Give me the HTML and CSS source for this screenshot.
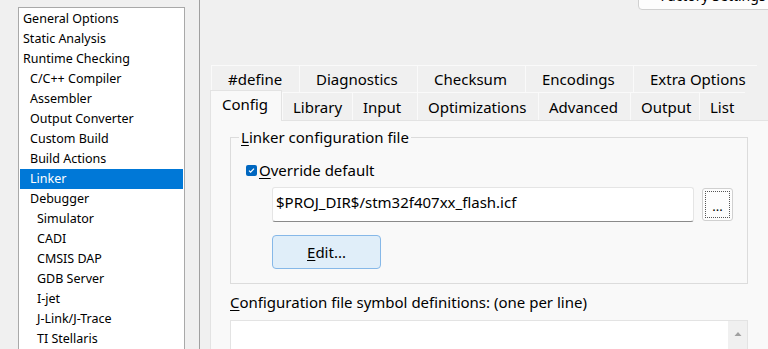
FILE: index.html
```html
<!DOCTYPE html>
<html lang="en">
<head>
  <meta charset="UTF-8">
  <title>Options for node - Linker</title>
  <link rel="stylesheet" href="styles.css">
</head>
<body>
  <div class="window">
    <!-- category tree -->
    <aside class="sidebar">
      <ul class="tree">
        <li class="lvl0">General Options</li>
        <li class="lvl0">Static Analysis</li>
        <li class="lvl0">Runtime Checking</li>
        <li class="lvl1">C/C++ Compiler</li>
        <li class="lvl1">Assembler</li>
        <li class="lvl1">Output Converter</li>
        <li class="lvl1">Custom Build</li>
        <li class="lvl1">Build Actions</li>
        <li class="lvl1 selected">Linker</li>
        <li class="lvl1">Debugger</li>
        <li class="lvl2">Simulator</li>
        <li class="lvl2">CADI</li>
        <li class="lvl2">CMSIS DAP</li>
        <li class="lvl2">GDB Server</li>
        <li class="lvl2">I-jet</li>
        <li class="lvl2">J-Link/J-Trace</li>
        <li class="lvl2">TI Stellaris</li>
      </ul>
    </aside>

    <main class="main">
      <div class="topbar">
        <button class="btn factory">Factory Settings</button>
      </div>

      <!-- two rows of tabs -->
      <div class="tabs">
        <div class="tab-row back">
          <div class="tab">#define</div>
          <div class="tab">Diagnostics</div>
          <div class="tab">Checksum</div>
          <div class="tab">Encodings</div>
          <div class="tab">Extra Options</div>
        </div>
        <div class="tab-row front">
          <div class="tab active">Config</div>
          <div class="tab">Library</div>
          <div class="tab">Input</div>
          <div class="tab">Optimizations</div>
          <div class="tab">Advanced</div>
          <div class="tab">Output</div>
          <div class="tab">List</div>
        </div>
      </div>

      <section class="panel">
        <fieldset class="group">
          <legend><u>L</u>inker configuration file</legend>
          <div class="group-body">
            <label class="check">
              <span class="box">
                <svg width="11" height="11" viewBox="0 0 11 11"><path d="M3 5.6 L4.6 7.2 L8 3.6" fill="none" stroke="#fff" stroke-width="1.2"/></svg>
              </span>
              <span><u>O</u>verride default</span>
            </label>
            <div class="file-row">
              <div class="input">$PROJ_DIR$/stm32f407xx_flash.icf</div>
              <button class="btn browse"><span class="focus">...</span></button>
            </div>
            <button class="btn edit"><u>E</u>dit...</button>
          </div>
        </fieldset>

        <div class="field-label"><u>C</u>onfiguration file symbol definitions: (one per line)</div>
        <div class="textarea">
          <div class="scrollbar">
            <svg width="8" height="6" viewBox="0 0 8 6"><path d="M0.5 5 L4 1 L7.5 5 Z" fill="#a0a0a0"/></svg>
          </div>
        </div>
      </section>
    </main>
  </div>
</body>
</html>
```

FILE: styles.css
```css
:root {
  --bg: #f0f0f0;
  --panel: #f9f9f9;
  --line: #dcdcdc;
  --select: #0078d7;
}
body {
  margin: 0;
  background: var(--bg);
  font-family: "Noto Sans", "Open Sans", sans-serif;
  font-size: 15px;
  color: #000;
  height: 349px;
  overflow: hidden;
}
u {
  text-underline-offset: 2px;
}
.window {
  display: flex;
  height: 349px;
}

/* tree */
.sidebar {
  flex: none;
  width: 200px;
  box-sizing: border-box;
  border-right: 1px solid #a0a0a0;
  padding: 7px 0 0 18px;
}
.tree {
  list-style: none;
  margin: 0;
  padding: 1px;
  width: 167px;
  height: 400px;
  box-sizing: border-box;
  background: #fff;
  border: 1px solid #a9a9a9;
  font-size: 12.5px;
}
.tree li {
  height: 20px;
  line-height: 20px;
  white-space: nowrap;
}
.tree .lvl0 { padding-left: 3px; }
.tree .lvl1 { padding-left: 10px; }
.tree .lvl2 { padding-left: 17px; }
.tree .selected {
  background: var(--select);
  color: #fff;
}

/* right side */
.main {
  flex: 1;
  min-width: 0;
  padding-left: 10px;
}
.btn {
  font: inherit;
  color: #000;
  background: #fdfdfd;
  border: 1px solid #d0d0d0;
  border-radius: 4px;
  padding: 0;
}
.topbar {
  display: flex;
  justify-content: flex-end;
  margin: -20px -20px 0 0;
  height: 30px;
}
.factory {
  width: 150px;
  height: 30px;
  font-size: 14px;
}

.tabs {
  margin-top: 55px;
}
.tab-row {
  display: flex;
  align-items: flex-end;
}
.tab {
  box-sizing: border-box;
  display: flex;
  align-items: center;
  white-space: nowrap;
  background: var(--bg);
  border-top: 1px solid #fafafa;
  border-left: 1px solid #fafafa;
}
.back {
  height: 27px;
  padding-left: 1px;
}
.back .tab {
  height: 27px;
  padding-left: 16px;
}
.back .tab:nth-child(1) { width: 88px; }
.back .tab:nth-child(2) { width: 118px; }
.back .tab:nth-child(3) { width: 108px; }
.back .tab:nth-child(4) { width: 108px; }
.back .tab:nth-child(5) { width: 124px; }

.front {
  height: 28px;
}
.front .tab {
  height: 28px;
  padding-left: 10px;
}
.front .tab:nth-child(1) { width: 72px; }
.front .tab:nth-child(2) { width: 70px; }
.front .tab:nth-child(3) { width: 65px; }
.front .tab:nth-child(4) { width: 121px; }
.front .tab:nth-child(5) { width: 92px; }
.front .tab:nth-child(6) { width: 69px; }
.front .tab:nth-child(7) { width: 46px; }
.front .tab.active {
  position: relative;
  z-index: 1;
  height: 31px;
  margin-bottom: -1px;
  padding: 0 0 4px 11px;
  background: var(--panel);
  border: 1px solid #e3e3e3;
  border-bottom: none;
}

.panel {
  background: var(--panel);
  border: 1px solid #e3e3e3;
  margin-right: -30px;
  padding: 6px 49px 0 19px;
  height: 300px;
}
.group {
  margin: 0;
  padding: 0;
  min-width: 0;
  border: 1px solid var(--line);
}
.group legend {
  margin-left: 8px;
  padding: 0 2px;
  line-height: 20px;
}
.group-body {
  padding: 13px 14px 14px 15px;
}
.check {
  display: flex;
  align-items: center;
  height: 20px;
  gap: 2px;
}
.box {
  width: 11px;
  height: 11px;
  border-radius: 2px;
  background: #0067c0;
  display: flex;
}
.file-row {
  display: flex;
  align-items: flex-start;
  gap: 8px;
  margin: 7px 0 0 26px;
}
.input {
  width: 425px;
  height: 35px;
  box-sizing: border-box;
  background: #fff;
  border: 1px solid #e5e5e5;
  border-bottom-color: #8a8a8a;
  border-radius: 3px;
  padding: 4px 0 0 3px;
  line-height: 20px;
}
.browse {
  width: 31px;
  height: 33px;
  margin-top: 1px;
  padding: 2px;
  border-radius: 3px;
}
.browse .focus {
  display: flex;
  align-items: flex-end;
  justify-content: center;
  height: 100%;
  box-sizing: border-box;
  border: 1px dotted #555;
  font-size: 13px;
  line-height: 18px;
  padding-bottom: 2px;
}
.edit {
  display: block;
  width: 109px;
  height: 34px;
  margin: 13px 0 0 26px;
  background: #e0eef9;
  border-color: #86b8e8;
}

.field-label {
  margin-top: 8px;
  line-height: 20px;
}
.textarea {
  margin-top: 8px;
  height: 60px;
  background: #fff;
  border: 1px solid #e3e3e3;
  display: flex;
  justify-content: flex-end;
}
.scrollbar {
  width: 19px;
  background: #f0f0f0;
  display: flex;
  justify-content: center;
  padding-top: 10px;
  box-sizing: border-box;
}
```
